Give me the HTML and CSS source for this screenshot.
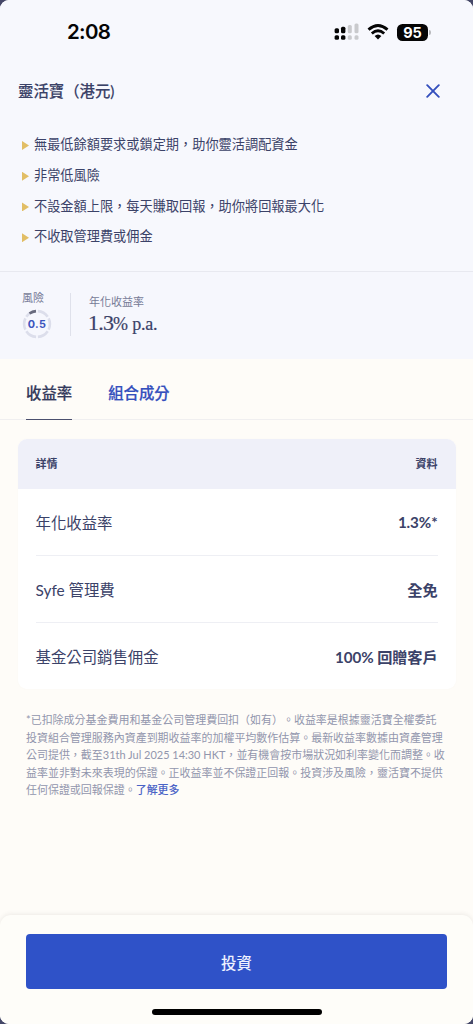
FILE: index.html
```html
<!DOCTYPE html>
<html lang="zh-Hant">
<head>
<meta charset="utf-8">
<meta name="viewport" content="width=device-width">
<title>靈活寶（港元)</title>
<link rel="stylesheet" href="styles.css">
</head>
<body>
<main class="screen">
  <header class="top">
    <div class="status">
      <span class="time">2:08</span>
      <div class="indicators">
        <svg width="26" height="18" viewBox="0 0 26 18">
          <g fill="#050505"><rect x="0.6" y="5.3" width="4.4" height="5" rx="1.5"/><rect x="7" y="3.7" width="4.4" height="6.6" rx="1.5"/><rect x="0.6" y="12.3" width="4.4" height="4.4" rx="1.5"/><rect x="7" y="12.3" width="4.4" height="4.4" rx="1.5"/></g>
          <g fill="#c9cacd"><rect x="13.8" y="2" width="4" height="8.3" rx="1.5"/><rect x="20.5" y="0.4" width="4" height="9.9" rx="1.5"/><rect x="13.8" y="12.3" width="4" height="4.4" rx="1.5"/><rect x="20.5" y="12.3" width="4" height="4.4" rx="1.5"/></g>
        </svg>
        <svg class="wifi" width="22" height="16" viewBox="0 0 22 16" fill="none" stroke="#050505" stroke-width="2.9">
          <path d="M1.5 5.7Q11 -2.5 20.5 5.7"/><path d="M4.8 9.5Q11 4.1 17.2 9.5"/><path d="M7.6 12Q11 9 14.4 12L11 15.6Z" fill="#050505" stroke="none"/>
        </svg>
        <span class="battery">95</span><i class="battery-tip"></i>
      </div>
    </div>
    <div class="title-row">
      <h1>靈活寶（港元)</h1>
      <svg width="14" height="14" viewBox="0 0 14 14" stroke="#344fbd" stroke-width="1.9" stroke-linecap="round"><path d="M1.2 1.2 12.8 12.8M12.8 1.2 1.2 12.8"/></svg>
    </div>
    <ul class="features">
      <li>無最低餘額要求或鎖定期，助你靈活調配資金</li>
      <li>非常低風險</li>
      <li>不設金額上限，每天賺取回報，助你將回報最大化</li>
      <li>不收取管理費或佣金</li>
    </ul>
  </header>
  <section class="metrics">
    <div class="risk">
      <span class="label">風險</span>
      <div class="gauge">
        <svg width="30" height="30" viewBox="0 0 30 30" fill="none" stroke-width="2.6">
          <circle cx="15" cy="15" r="12.9" pathLength="60" stroke="#dcdeeb" stroke-dasharray="8.6 1.4" stroke-dashoffset="4.3"/>
          <path d="M7.5 4.5A12.9 12.9 0 0 1 14 2.15" stroke="#686a7d"/>
        </svg>
        <b>0.5</b>
      </div>
    </div>
    <div class="yield">
      <span class="label">年化收益率</span>
      <div class="rate">1.3<small>% p.a.</small></div>
    </div>
  </section>
  <nav class="tabs"><span class="tab active">收益率</span><span class="tab">組合成分</span></nav>
  <section class="card">
    <div class="card-head"><span>詳情</span><span>資料</span></div>
    <div class="row"><span>年化收益率</span><b>1.3%*</b></div>
    <div class="row"><span>Syfe 管理費</span><b>全免</b></div>
    <div class="row"><span>基金公司銷售佣金</span><b>100% 回贈客戶</b></div>
  </section>
  <p class="note">
    <span>*已扣除成分基金費用和基金公司管理費回扣（如有）。收益率是根據靈活寶全權委託</span>
    <span>投資組合管理服務內資產到期收益率的加權平均數作估算。最新收益率數據由資產管理</span>
    <span>公司提供，截至<em>31th Jul 2025 14:30 HKT</em>，並有機會按市場狀況如利率變化而調整。收</span>
    <span>益率並非對未來表現的保證。正收益率並不保證正回報。投資涉及風險，靈活寶不提供</span>
    <span>任何保證或回報保證。<a>了解更多</a></span>
  </p>
  <footer class="footer">
    <button class="invest">投資</button>
    <div class="home"></div>
  </footer>
</main>
</body>
</html>
```
FILE: styles.css
```css
* { box-sizing: border-box; }
body { margin: 0; background: #454868; color: #3b4268; font-family: Lato, "Noto Sans CJK TC", sans-serif; text-spacing-trim: space-all; }
.screen { width: 473px; height: 1024px; display: flex; flex-direction: column; overflow: hidden; border-radius: 9px; background: #fefcf8; }
.top { height: 272px; background: #f7f8fd; border-bottom: 1px solid #e8e9f0; }
.status { height: 64px; padding: 0 42px 0 67px; display: flex; align-items: center; justify-content: space-between; }
.time { color: #050505; font: 600 20.5px/24px Inter, sans-serif; letter-spacing: -.7px; }
.indicators { display: flex; align-items: center; }
.wifi { margin-left: 7px; }
.battery { width: 31px; height: 17px; margin-left: 8px; border-radius: 5.5px; background: #050505; color: #fff; font: 700 14.5px/17px Inter, sans-serif; text-align: center; }
.battery-tip { width: 2px; height: 5px; margin-left: 1px; border-radius: 0 2px 2px 0; background: #b9babd; }
.title-row { height: 54px; padding: 0 33px 0 18px; display: flex; align-items: center; justify-content: space-between; }
h1 { margin: 0; font-size: 15.4px; font-weight: 500; line-height: 24px; -webkit-text-stroke: .1px; }
.features { margin: 11px 0 0; padding: 0 22px; list-style: none; font-size: 13.2px; line-height: 30.8px; white-space: nowrap; }
.features li { display: flex; align-items: center; gap: 5px; }
.features li::before { content: ""; width: 7px; height: 9px; margin-top: 2px; background: #e2be65; clip-path: polygon(0 0, 100% 50%, 0 100%); }
.metrics { height: 87px; padding: 16px 22px 0; display: flex; background: #f6f7fd; }
.label { display: block; color: #777b97; font-size: 11px; line-height: 19px; }
.risk { width: 48px; height: 56px; }
.gauge { width: 30px; height: 30px; display: grid; place-items: center; margin-top: 2px; }
.gauge svg, .gauge b { grid-area: 1 / 1; }
.gauge b { padding-top: 2px; color: #3b54bd; font: 700 10.8px/14px Inter, sans-serif; letter-spacing: .3px; }
.yield { height: 43px; margin-top: 5px; padding-left: 17px; border-left: 1px solid #dfe1eb; }
.yield .label { padding-left: 1px; line-height: 17px; }
.rate { font: 22px/26px "Liberation Serif", serif; letter-spacing: -.8px; white-space: nowrap; -webkit-text-stroke: .2px; }
.rate small { font-size: 18px; letter-spacing: -.2px; }
.tabs { height: 61px; padding-left: 26px; display: flex; gap: 36px; border-bottom: 1px solid #f0eff0; font-size: 15.4px; font-weight: 500; line-height: 68px; -webkit-text-stroke: .2px; }
.tab { height: 61px; color: #344fbd; }
.active { color: #343a5c; border-bottom: 1.5px solid #4b506e; }
.card { width: 438px; height: 250px; margin: 19px 0 0 17.5px; overflow: hidden; border-radius: 9px; background: #fff; box-shadow: 0 0 3px #55507005; }
.card-head { height: 50px; padding: 0 18px; display: flex; align-items: center; justify-content: space-between; background: #eff0f9; font-size: 11px; font-weight: 700; line-height: 16px; padding-bottom: 1px; }
.row { height: 67px; margin: 0 18px; padding-bottom: 1px; display: flex; align-items: center; justify-content: space-between; border-bottom: 1px solid #eeeff4; font-size: 15.4px; }
.row:last-child { border: 0; }
.row b { font-size: 15.2px; font-weight: 700; letter-spacing: -.1px; }
.note { margin: 22px 0 0 26px; color: #9296ad; font-size: 10.97px; line-height: 17.6px; white-space: nowrap; }
.note span { display: block; }
.note em { font-style: normal; }
.note a { color: #4a63c6; font-weight: 500; }
.footer { height: 109px; margin-top: auto; padding: 19px 26px 0; border-radius: 11px 11px 0 0; background: #fefdf9; box-shadow: 0 -1px 4px #5550501a; }
.invest { display: block; width: 421px; height: 55px; padding: 0; border: 0; border-radius: 4px; background: #2f52c8; color: #eef2ff; font: 500 15.4px/54px "Noto Sans CJK TC", sans-serif; }
.home { width: 170px; height: 6px; margin: 20px auto 0; border-radius: 3px; background: #000; }
```
